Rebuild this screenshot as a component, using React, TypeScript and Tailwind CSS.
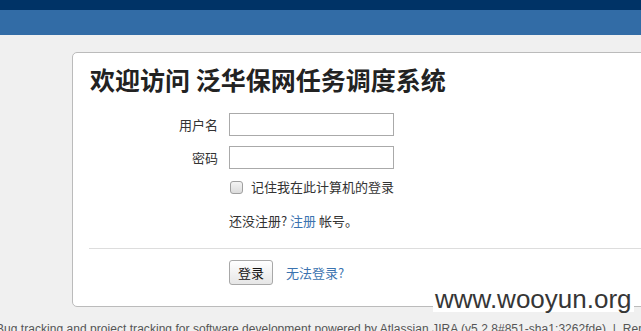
import React from "react";

export default function App() {
  const cjk = { fontFamily: '"Noto Sans CJK SC", "Liberation Sans", sans-serif' };
  return (
    <div className="relative w-[641px] h-[331px] overflow-hidden bg-[#f0f0f0]" style={{ fontFamily: '"Liberation Sans", "Noto Sans CJK SC", sans-serif' }}>
      <div className="h-[10px] bg-[#003366]" />
      <div className="h-[25px] bg-[#326ca6]" />
      <div className="ml-[72px] mt-[17px] w-[620px] h-[255px] rounded-[5px] border border-[#bbbbbb] bg-white">
        <h1 className="pl-[17px] pt-[11px] text-[25px] leading-[30px] font-bold text-[#222]" style={cjk}>
          欢迎访问 泛华保网任务调度系统
        </h1>
        <div className="mt-[19px] flex items-center">
          <label className="w-[145px] text-right text-[13px] text-[#333]" style={cjk}>用户名</label>
          <div className="ml-[11px] w-[165px] h-[23px] border border-[#aaaaaa] bg-white" />
        </div>
        <div className="mt-[10px] flex items-center">
          <label className="w-[145px] text-right text-[13px] text-[#333]" style={cjk}>密码</label>
          <div className="ml-[11px] w-[165px] h-[23px] border border-[#aaaaaa] bg-white" />
        </div>
        <div className="mt-[8px] h-[20px] flex items-center pl-[157px]">
          <div className="w-[13px] h-[13px] rounded-[3px] border border-[#a0a0a0] bg-gradient-to-b from-[#f4f4f4] to-[#dcdcdc]" />
          <span className="ml-[8px] text-[13px] text-[#333]" style={cjk}>记住我在此计算机的登录</span>
        </div>
        <div className="mt-[15px] h-[18px] leading-[18px] pl-[156px] text-[13px] text-[#333]" style={cjk}>
          还没注册? <span className="text-[#3b73af]">注册</span> 帐号。
        </div>
        <div className="mt-[18px] mx-[16px] h-px bg-[#dddddd]" />
        <div className="mt-[11px] flex items-center pl-[156px]">
          <div className="w-[44px] h-[25px] rounded-[3px] border border-[#a8a8a8] bg-gradient-to-b from-white to-[#e6e6e6] flex items-center justify-center text-[13px] text-[#111]" style={cjk}>
            登录
          </div>
          <span className="ml-[13px] text-[13px] text-[#3b73af]" style={cjk}>无法登录?</span>
        </div>
      </div>
      <div className="mt-[14px] ml-[-4px] whitespace-nowrap text-[12px] leading-[16px] tracking-[0.04px] text-[#555]">
        Bug tracking and project tracking for software development powered by Atlassian JIRA (v5.2.8#851-sha1:3262fde)&nbsp;&nbsp;|&nbsp;&nbsp;Report a problem
      </div>
      <div className="absolute left-[433px] top-[286px] bg-white px-[2px] text-[26px] leading-[26px] text-[#363636]" style={{ fontFamily: '"Liberation Sans", Arial, sans-serif' }}>
        www.wooyun.org
      </div>
    </div>
  );
}
